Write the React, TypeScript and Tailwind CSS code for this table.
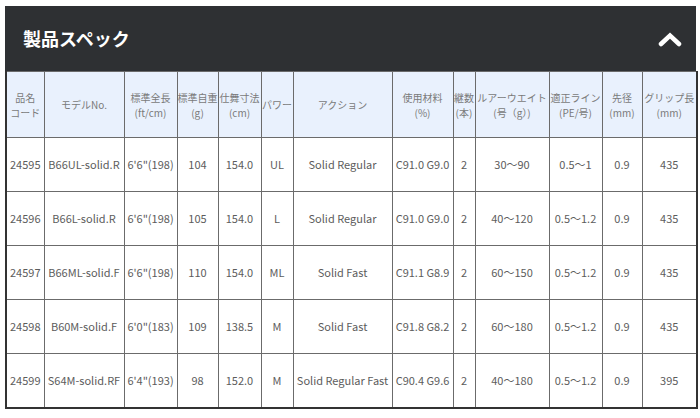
import React from 'react';

type Spec = {
  code: string;
  model: string;
  length: string;
  weight: string;
  closed: string;
  power: string;
  action: string;
  material: string;
  pieces: string;
  lure: string;
  line: string;
  tip: string;
  grip: string;
};

const specs: Spec[] = [
  { code: '24595', model: 'B66UL-solid.R', length: '6\'6"(198)', weight: '104', closed: '154.0', power: 'UL', action: 'Solid Regular', material: 'C91.0 G9.0', pieces: '2', lure: '30～90', line: '0.5～1', tip: '0.9', grip: '435' },
  { code: '24596', model: 'B66L-solid.R', length: '6\'6"(198)', weight: '105', closed: '154.0', power: 'L', action: 'Solid Regular', material: 'C91.0 G9.0', pieces: '2', lure: '40～120', line: '0.5～1.2', tip: '0.9', grip: '435' },
  { code: '24597', model: 'B66ML-solid.F', length: '6\'6"(198)', weight: '110', closed: '154.0', power: 'ML', action: 'Solid Fast', material: 'C91.1 G8.9', pieces: '2', lure: '60～150', line: '0.5～1.2', tip: '0.9', grip: '435' },
  { code: '24598', model: 'B60M-solid.F', length: '6\'0"(183)', weight: '109', closed: '138.5', power: 'M', action: 'Solid Fast', material: 'C91.8 G8.2', pieces: '2', lure: '60～180', line: '0.5～1.2', tip: '0.9', grip: '435' },
  { code: '24599', model: 'S64M-solid.RF', length: '6\'4"(193)', weight: '98', closed: '152.0', power: 'M', action: 'Solid Regular Fast', material: 'C90.4 G9.6', pieces: '2', lure: '40～180', line: '0.5～1.2', tip: '0.9', grip: '395' },
];

const headers: { w: string; lines: string[] }[] = [
  { w: 'w-[38px]', lines: ['品名', 'コード'] },
  { w: 'w-[80px]', lines: ['モデルNo.'] },
  { w: 'w-[53px]', lines: ['標準全長', '(ft/cm)'] },
  { w: 'w-[41px]', lines: ['標準自重', '(g)'] },
  { w: 'w-[43px]', lines: ['仕舞寸法', '(cm)'] },
  { w: 'w-[32px]', lines: ['パワー'] },
  { w: 'w-[99px]', lines: ['アクション'] },
  { w: 'w-[61px]', lines: ['使用材料', '(%)'] },
  { w: 'w-[22px]', lines: ['継数', '(本)'] },
  { w: 'w-[74px]', lines: ['ルアーウエイト', '(号（g）)'] },
  { w: 'w-[53px]', lines: ['適正ライン', '(PE/号)'] },
  { w: 'w-[40px]', lines: ['先径', '(mm)'] },
  { w: 'w-[55px]', lines: ['グリップ長', '(mm)'] },
];

const font = { fontFamily: '"Noto Sans CJK JP", "Noto Sans", sans-serif' };

export default function App() {
  return (
    <div className="w-[700px] h-[418px] bg-white pt-[6px] pl-[5px]" style={font}>
      <div className="w-[691px]">
        <div className="h-[65px] bg-[#2e3033] flex items-center justify-between pl-[18px] pr-[14px]">
          <h2 className="text-white text-[18px] font-bold">製品スペック</h2>
          <svg width="24" height="16" viewBox="0 0 24 16">
            <polyline points="3,13 12,4.5 21,13" fill="none" stroke="#ffffff" strokeWidth="4.5" strokeLinejoin="miter" strokeLinecap="round" />
          </svg>
        </div>
        <table className="w-[691px] table-fixed border-collapse border-2 border-t-0 border-[#333]">
          <colgroup>
            {headers.map((h, i) => (
              <col key={i} className={h.w} />
            ))}
          </colgroup>
          <thead>
            <tr className="h-[66px] bg-[#e9f1fd]">
              {headers.map((h, i) => (
                <th key={i} className="border border-[#6b6b6b] p-0 font-normal text-[10px] leading-[15px] text-[#7a7a7a] text-center whitespace-nowrap overflow-hidden">
                  {h.lines.map((l, j) => (
                    <div key={j}>{l}</div>
                  ))}
                </th>
              ))}
            </tr>
          </thead>
          <tbody>
            {specs.map((s) => (
              <tr key={s.code} className="h-[54px]">
                {[s.code, s.model, s.length, s.weight, s.closed, s.power, s.action, s.material, s.pieces, s.lure, s.line, s.tip, s.grip].map((v, i) => (
                  <td key={i} className="border border-[#6b6b6b] p-0 text-center text-[11px] text-[#5c5c5c] whitespace-nowrap overflow-hidden">
                    {v}
                  </td>
                ))}
              </tr>
            ))}
          </tbody>
        </table>
      </div>
    </div>
  );
}
